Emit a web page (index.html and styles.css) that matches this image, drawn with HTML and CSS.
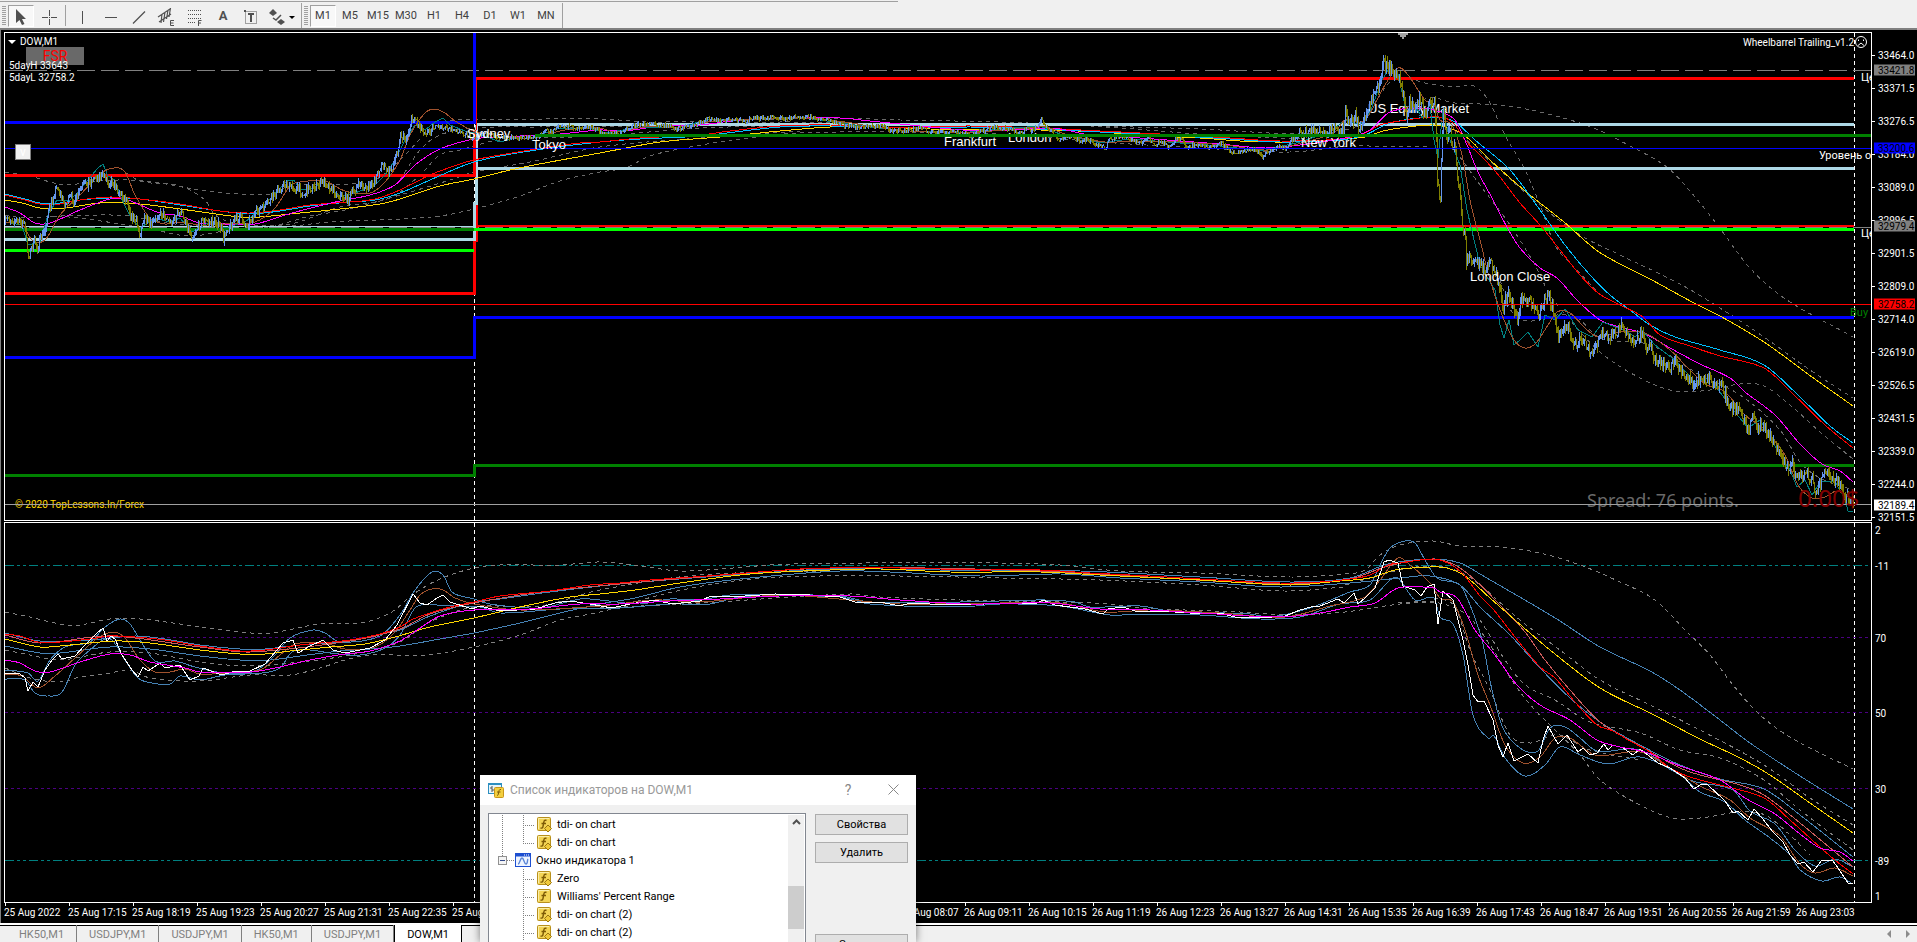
FILE: index.html
```html
<!DOCTYPE html>
<html lang="ru">
<head>
    <meta charset="UTF-8">
    <meta name="viewport" content="width=device-width, initial-scale=1.0">
    <title>DOW,M1</title>
    <link rel="stylesheet" href="styles.css">
</head>
<body>
    <svg width="0" height="0" class="defs">
        <symbol id="icon-func" viewBox="0 0 16 16">
            <rect x="1.5" y="1.5" width="13" height="13" rx="1" fill="#f3d455" stroke="#b8901c"/>
            <path d="M2.5 13V2.5H13" fill="none" stroke="#fbeea8"/>
            <path d="M10.5 4.5C8.5 3.5 8 5 7.8 6.5L7 10.5C6.7 12 6 12.5 4.5 11.8M5.5 7.5H10" fill="none" stroke="#7d5a06" stroke-width="1.4"/>
        </symbol>
        <symbol id="icon-func-custom" viewBox="0 0 16 16">
            <use href="#icon-func"/>
            <path d="M12 9L15.5 12.5L12 16L8.5 12.5Z" fill="#f0c93a" stroke="#9a7610"/>
        </symbol>
    </svg>

    <header class="toolbar">
        <div class="tool-group">
            <span class="grip"></span>
            <button class="tool active" aria-label="Cursor"><svg viewBox="0 0 24 22"><path d="M7 4V18L10.5 15L13 20L15.5 19L13 14H17Z" fill="#505050"/></svg></button>
            <button class="tool cross" aria-label="Crosshair"><svg viewBox="0 0 24 22"><path d="M11.500 5V11M11.500 14V20M4 12.500H10M13 12.500H19M11 12.500H12" stroke="#505050" fill="none"/></svg></button>
            <span class="divider"></span>
            <button class="tool" aria-label="Vertical line"><svg viewBox="0 0 24 22"><path d="M11.5 6V19" stroke="#505050"/></svg></button>
            <button class="tool" aria-label="Horizontal line"><svg viewBox="0 0 24 22"><path d="M6 12.5H18" stroke="#505050"/></svg></button>
            <button class="tool" aria-label="Trend line"><svg viewBox="0 0 24 22"><path d="M6 18.5L18 6.5" stroke="#505050" stroke-width="1.3"/></svg></button>
            <button class="tool" aria-label="Channel"><svg viewBox="0 0 24 22"><path d="M3 12L15 4M4 17L16 9M7 9L6 18M10 7L8.5 17M13 5L11.5 14M15.500 3L14 12" stroke="#505050" stroke-width="1.2" fill="none"/><path d="M19 15.5H15.500V20.5H19M15.5 18H18.5" stroke="#505050" fill="none"/></svg></button>
            <button class="tool" aria-label="Fibonacci"><svg viewBox="0 0 24 22"><path d="M5 5.5H18M5 9.5H18M5 13.5H18M5 17.5H13" stroke="#505050" stroke-dasharray="1 1"/><path d="M18.500 15.5H15.5V21M15.5 18H18" stroke="#505050" fill="none"/></svg></button>
            <button class="tool letter">A</button>
            <button class="tool" aria-label="Text label"><svg viewBox="0 0 24 22"><rect x="6.5" y="6.5" width="11" height="12" fill="none" stroke="#505050" stroke-dasharray="1 1"/><path d="M9 9H15M12 9V17" stroke="#505050" stroke-width="2"/><path d="M5 6H7" stroke="#505050" stroke-width="2"/></svg></button>
            <button class="tool arrows" aria-label="Arrows"><svg viewBox="0 0 34 22"><path d="M4 8L8 4L12 8L8 11Z" fill="#505050"/><path d="M8 13L11 15L16 10" stroke="#505050" stroke-width="1.5" fill="none"/><path d="M12 17L16 14L20 17L16 20Z" fill="#505050"/><path d="M24 11H30L27 14Z" fill="#000"/></svg></button>
        </div>
        <div class="tool-group">
            <span class="grip"></span>
            <button class="period active">M1</button>
            <button class="period">M5</button>
            <button class="period">M15</button>
            <button class="period">M30</button>
            <button class="period">H1</button>
            <button class="period">H4</button>
            <button class="period">D1</button>
            <button class="period">W1</button>
            <button class="period">MN</button>
        </div>
    </header>

    <main class="chart">
        <section class="pane">
            <div class="labels" id="backLabels"></div>
            <svg class="plot" id="pricePlot" viewBox="5 33 1866 487" preserveAspectRatio="none"></svg>
            <div class="labels" id="frontLabels"></div>
            <div class="symbol"><span class="caret"></span>DOW,M1</div>
            <button class="fsr">FSR</button>
            <div class="day-range">
                <p>5dayH 33643</p>
                <p>5dayL 32758.2</p>
            </div>
            <button class="toggle">v</button>
            <div class="expert">Wheelbarrel Trailing_v1.2<svg width="14" height="14" viewBox="0 0 14 14"><circle cx="7" cy="7" r="5.5" fill="none" stroke="#fff"/><path d="M4 10.5L7 8L10 10.5M4.5 4.500V6M9.5 4.5V6" fill="none" stroke="#fff"/></svg></div>
        </section>
        <div class="scale price-scale">
            <ol class="prices">
                <li>33464.0</li>
                <li>33371.5</li>
                <li>33276.5</li>
                <li>33184.0</li>
                <li>33089.0</li>
                <li>32996.5</li>
                <li>32901.5</li>
                <li>32809.0</li>
                <li>32714.0</li>
                <li>32619.0</li>
                <li>32526.5</li>
                <li>32431.5</li>
                <li>32339.0</li>
                <li>32244.0</li>
                <li>32151.5</li>
            </ol>
            <div id="priceMarks"></div>
        </div>

        <section class="pane">
            <svg class="plot" id="indicatorPlot" viewBox="5 523 1866 379" preserveAspectRatio="none"></svg>
        </section>
        <div class="scale" id="levelScale"></div>

        <ol class="times" id="times"></ol>
    </main>

    <footer class="tabs">
        <nav>
            <a href="#">HK50,M1</a>
            <a href="#">USDJPY,M1</a>
            <a href="#">USDJPY,M1</a>
            <a href="#">HK50,M1</a>
            <a href="#">USDJPY,M1</a>
            <a href="#" class="active">DOW,M1</a>
        </nav>
        <svg class="tab-arrows" width="24" height="8" viewBox="0 0 24 8"><path d="M4 0V8L0 4ZM19 0V8L23 4Z" fill="#8c8c8c"/></svg>
    </footer>

    <div class="dialog" role="dialog" aria-labelledby="dialogTitle">
        <div class="dialog-head">
            <svg width="16" height="16" viewBox="0 0 16 16"><rect x="0.5" y="1.5" width="13" height="10" fill="#e8f5fb" stroke="#2d8fc0"/><path d="M0 2H14" stroke="#2d8fc0" stroke-width="2"/><path d="M4 4V10M2 6H4M4 8H6" stroke="#555"/><rect x="6.5" y="5.5" width="9" height="10" rx="1" fill="#f3cf3f" stroke="#c8961a"/><path d="M13 7.5C11 7 11 9 10.5 11C10.3 13 10 13.5 9 13.3M9 10H12.5" fill="none" stroke="#7d5a06"/></svg>
            <h2 id="dialogTitle">Список индикаторов на DOW,M1</h2>
            <button aria-label="Help">?</button>
            <button aria-label="Close"><svg width="11" height="11" viewBox="0 0 11 11"><path d="M0.5 0.5L10.5 10.5M10.5 0.5L0.5 10.5" stroke="#888"/></svg></button>
        </div>
        <div class="dialog-body">
            <div class="tree">
                <ul>
                    <li class="leaf"><svg class="icon"><use href="#icon-func-custom"/></svg>tdi- on chart</li>
                    <li class="leaf last"><svg class="icon"><use href="#icon-func-custom"/></svg>tdi- on chart</li>
                    <li class="branch"><svg width="9" height="9" viewBox="0 0 9 9"><rect x="0.5" y="0.5" width="8" height="8" fill="#f4f4f4" stroke="#919191"/><path d="M2 4.5H7" stroke="#31488a"/></svg><span class="dots"></span><svg class="icon" viewBox="0 0 16 16"><rect x="0.5" y="1.5" width="15" height="13" fill="#eef4ff" stroke="#1d4fd0"/><path d="M0 3H16" stroke="#1d4fd0" stroke-width="3"/><path d="M9 3H10M11 3H12M13 3H14" stroke="#fff"/><path d="M3 12C5 12 5 6 7 6S9 12 11 12S12 8 13 7" fill="none" stroke="#5c86d6" stroke-width="1.4"/></svg>Окно индикатора 1</li>
                    <li class="leaf"><svg class="icon"><use href="#icon-func-custom"/></svg>Zero</li>
                    <li class="leaf"><svg class="icon"><use href="#icon-func"/></svg>Williams' Percent Range</li>
                    <li class="leaf"><svg class="icon"><use href="#icon-func-custom"/></svg>tdi- on chart (2)</li>
                    <li class="leaf"><svg class="icon"><use href="#icon-func-custom"/></svg>tdi- on chart (2)</li>
                </ul>
                <div class="scrollbar">
                    <svg width="9" height="6" viewBox="0 0 9 6"><path d="M1 5L4.5 1.5L8 5" fill="none" stroke="#505050" stroke-width="2"/></svg>
                    <span class="thumb"></span>
                </div>
            </div>
            <div class="actions">
                <button>Свойства</button>
                <button>Удалить</button>
                <button class="close">Закрыть</button>
            </div>
        </div>
    </div>

    <script src="chart.js"></script>
</body>
</html>
```
FILE: styles.css
```css
* {
    box-sizing: border-box;
}

body {
    margin: 0;
    height: 100vh;
    display: flex;
    flex-direction: column;
    overflow: hidden;
    position: relative;
    background-color: #f0f0f0;
    color: #000;
    font-family: Roboto, "Liberation Sans", sans-serif;
    font-size: 11px;
}

button {
    font-family: inherit;
    padding: 0;
    border: none;
    background: none;
}

ol,
ul {
    list-style: none;
    margin: 0;
    padding: 0;
}

p,
h2 {
    margin: 0;
}

.defs {
    position: absolute;
}

/* toolbar */

.toolbar {
    flex: none;
    height: 30px;
    display: flex;
    padding-top: 3px;
    border-bottom: 2px solid #808080;
    background: linear-gradient(#a0a0a0, #a0a0a0) 0 1px / 898px 1px no-repeat #f0f0f0;
}

.tool-group {
    display: flex;
    align-items: center;
    padding: 0 2px;
    border-right: 1px solid #a0a0a0;
}

.grip {
    width: 4px;
    height: 20px;
    margin-right: 2px;
    background: repeating-linear-gradient(#a0a0a0 0 1px, #f0f0f0 1px 2px);
}

.divider {
    width: 1px;
    height: 21px;
    margin-right: 3px;
    background-color: #a0a0a0;
}

.tool {
    width: 28px;
    height: 22px;
    display: flex;
    align-items: center;
    justify-content: center;
}

.tool svg {
    width: 24px;
    height: 22px;
}

.tool.active,
.period.active {
    width: 26px;
    border: 1px solid;
    border-color: #a0a0a0 #fff #fff #a0a0a0;
    background-color: #f8f8f8;
}

.tool.cross {
    width: 31px;
}

.tool.letter {
    font-size: 13px;
    font-weight: bold;
    color: #505050;
}

.tool.arrows,
.tool.arrows svg {
    width: 34px;
}

.period {
    width: 28px;
    height: 22px;
    font-size: 11px;
    color: #404040;
}

/* chart */

.chart {
    flex: 1;
    min-height: 0;
    display: grid;
    grid-template-columns: 1fr 45px;
    grid-template-rows: 489fr 1px 381fr 20px;
    padding: 2px 0 0 3px;
    border-left: 1px solid #808080;
    background-color: #000;
    color: #fff;
    font-size: 10px;
    line-height: 11px;
}

.chart > :nth-child(3),
.chart > :nth-child(4) {
    grid-row: 3;
}

.pane {
    position: relative;
    border: 1px solid #fff;
    overflow: hidden;
    min-height: 0;
}

.plot {
    position: absolute;
    inset: 0;
    width: 100%;
    height: 100%;
    fill: none;
    shape-rendering: crispEdges;
}

.plot path {
    vector-effect: non-scaling-stroke;
}

.labels span {
    position: absolute;
    white-space: nowrap;
    transform: translateY(-50%);
    font-size: 11px;
}

.labels .session {
    font-family: "Liberation Sans", Arial, sans-serif;
    font-size: 13px;
}

.labels .buy {
    color: #008000;
}

.labels .copyright {
    color: #ffd700;
    font-size: 10px;
}

.labels .spread {
    color: #696969;
    font-family: "Noto Sans", sans-serif;
    font-size: 18px;
}

.labels .profit {
    color: #800000;
    font-family: "Noto Sans", sans-serif;
    font-size: 24px;
}

.symbol {
    position: absolute;
    left: 3px;
    top: 3px;
    display: flex;
    align-items: center;
    gap: 4px;
}

.caret {
    border: 4px solid transparent;
    border-top-color: #fff;
    border-bottom: none;
}

.fsr {
    position: absolute;
    left: 21px;
    top: 14px;
    width: 58px;
    height: 18px;
    background-color: #696969;
    color: #f00;
    font-size: 14px;
    line-height: 18px;
}

.day-range {
    position: absolute;
    left: 4px;
    top: 27px;
}

.day-range p + p {
    margin-top: 1px;
}

.toggle {
    position: absolute;
    left: 10px;
    top: 111px;
    width: 16px;
    height: 16px;
    border: 1px solid #808080;
    background-color: #f0f0f0;
    color: #fff;
    font-size: 12px;
    line-height: 12px;
}

.expert {
    position: absolute;
    right: 3px;
    top: 2px;
    display: flex;
    align-items: center;
}

.scale {
    position: relative;
    min-height: 0;
}

.price-scale {
    grid-column: 2;
}

.prices {
    height: calc(100% + 2px);
    display: flex;
    flex-direction: column;
    justify-content: space-between;
    padding-top: 18px;
}

.prices li {
    position: relative;
    padding-left: 6px;
}

.prices li::before {
    content: "";
    position: absolute;
    left: 0;
    top: 5px;
    width: 3px;
    height: 1px;
    background-color: #fff;
}

.mark {
    position: absolute;
    left: 2px;
    right: 2px;
    padding-left: 4px;
    transform: translateY(-50%);
    color: #000;
}

.level {
    position: absolute;
    left: 3px;
    transform: translateY(-50%);
}

.times {
    grid-column: 1 / 3;
    grid-row: 4;
    display: flex;
    overflow: hidden;
}

.times li {
    flex: none;
    width: 64px;
    padding-top: 4px;
    white-space: nowrap;
    background: linear-gradient(#fff, #fff) 1px 0 / 1px 3px no-repeat;
}

/* chart tabs */

.tabs {
    flex: none;
    height: 19px;
    display: flex;
    justify-content: space-between;
    align-items: center;
    border-top: 2px solid #fff;
    box-shadow: inset 0 1px #000;
    padding-right: 6px;
    padding-left: 2px;
}

.tabs nav {
    display: flex;
    height: 17px;
}

.tabs a {
    padding: 0 12px;
    color: #808080;
    font-size: 11px;
    line-height: 19px;
    text-decoration: none;
    border-right: 1px solid #808080;
}

.tabs a:first-child {
    padding-left: 17px;
}

.tabs .active {
    color: #000;
    background-color: #fff;
    border: solid #000;
    border-width: 0 1px;
}

/* indicator list window */

.dialog {
    position: absolute;
    left: 480px;
    bottom: 0;
    width: 436px;
    height: 167px;
    overflow: hidden;
    background-color: #f0f0f0;
    box-shadow: 0 0 8px rgba(0, 0, 0, 0.5);
}

.dialog-head {
    height: 30px;
    display: flex;
    align-items: center;
    padding: 0 17px 0 8px;
    background-color: #fff;
    color: #999;
}

.dialog-head h2 {
    flex: 1;
    margin-left: 6px;
    font-size: 12px;
    font-weight: normal;
}

.dialog-head button {
    width: 12px;
    margin-left: 33px;
    font-size: 14px;
    color: #888;
}

.dialog-body {
    display: flex;
    gap: 9px;
    padding: 8px;
}

.tree {
    flex: 1;
    height: 160px;
    display: flex;
    padding: 1px;
    border: 1px solid #828790;
    background-color: #fff;
    font-size: 11px;
}

.tree ul {
    flex: 1;
    background: repeating-linear-gradient(#808080 0 1px, #fff 1px 2px) 12px 0 / 1px 44px no-repeat;
}

.tree li {
    height: 18px;
    display: flex;
    align-items: center;
    white-space: nowrap;
}

.icon {
    width: 16px;
    height: 16px;
    margin-right: 5px;
}

.leaf {
    padding-left: 46px;
    background:
        repeating-linear-gradient(#808080 0 1px, transparent 1px 2px) 33px 0 / 1px 18px no-repeat,
        repeating-linear-gradient(90deg, #808080 0 1px, transparent 1px 2px) 33px 10px / 12px 1px no-repeat;
}

.leaf.last {
    background-size: 1px 10px, 12px 1px;
}

.branch {
    padding-left: 8px;
}

.dots {
    width: 8px;
    height: 1px;
    background: repeating-linear-gradient(90deg, #808080 0 1px, transparent 1px 2px);
}

.scrollbar {
    width: 16px;
    background-color: #f0f0f0;
    text-align: center;
}

.thumb {
    display: block;
    height: 43px;
    margin-top: 58px;
    background-color: #cdcdcd;
}

.actions {
    width: 93px;
    padding-top: 1px;
}

.actions button {
    width: 93px;
    height: 21px;
    margin-bottom: 7px;
    border: 1px solid #adadad;
    background-color: #e1e1e1;
    font-size: 11px;
    display: block;
}

.actions .close {
    margin-top: 71px;
}
```
FILE: chart.js
```js
const NS = 'http://www.w3.org/2000/svg';
const pricePlot = document.getElementById('pricePlot');
const indicatorPlot = document.getElementById('indicatorPlot');

function parse(text) {
    return text.trim().split(/\s+/).map(p => p.split(',').map(Number));
}

function addPath(plot, d, color, width, dash) {
    const path = document.createElementNS(NS, 'path');
    path.setAttribute('d', d);
    path.setAttribute('stroke', color);
    path.setAttribute('stroke-width', width || 1);
    if (dash) path.setAttribute('stroke-dasharray', dash);
    plot.appendChild(path);
}

function polyline(plot, text, color, width, dash) {
    addPath(plot, 'M' + parse(text).join('L'), color, width, dash);
}

// Smooth line through all the points
function curve(plot, text, color, width, dash) {
    const p = parse(text);
    let d = 'M' + p[0];
    for (let i = 0; i < p.length - 1; i++) {
        const a = p[i - 1] || p[i], b = p[i], c = p[i + 1], e = p[i + 2] || c;
        const k = (c[0] - b[0]) / 3;
        const end = (c[1] - b[1]) / (c[0] - b[0]);
        const s1 = a === b ? end : (c[1] - a[1]) / (c[0] - a[0]);
        const s2 = e === c ? end : (e[1] - b[1]) / (e[0] - b[0]);
        d += `C${b[0] + k},${b[1] + s1 * k} ${c[0] - k},${c[1] - s2 * k} ${c[0]},${c[1]}`;
    }
    addPath(plot, d, color, width, dash);
}

// One bar per pixel, blue when it closes higher and olive when lower
function bars(text) {
    const p = parse(text);
    let up = '', down = '', seed = 7, prev = p[0][1];
    const rnd = () => (seed = (seed * 16807) % 2147483647) / 2147483647 - 0.5;
    for (let i = 0; i < p.length - 1; i++) {
        const [x1, y1] = p[i], [x2, y2] = p[i + 1];
        const range = x1 > 1340 ? 11 : x1 > 430 && x1 < 1290 ? 4 : 8;
        for (let x = x1; x < x2; x++) {
            const y = y1 + (y2 - y1) * (x - x1) / (x2 - x1) + rnd() * range;
            const top = Math.min(y, prev) - Math.abs(rnd()) * range;
            const low = Math.max(y, prev) + Math.abs(rnd()) * range;
            const seg = `M${x + 0.5},${top.toFixed(1)}V${low.toFixed(1)}`;
            if (y < prev) up += seg; else down += seg;
            prev = y;
        }
    }
    addPath(pricePlot, down, '#808000', 1);
    addPath(pricePlot, up, '#6495ed', 1);
}

// Day separator and last bar
for (const plot of [pricePlot, indicatorPlot]) {
    polyline(plot, '474.5,33 474.5,902', '#fff', 1, '4 3');
    polyline(plot, '1854.5,33 1854.5,902', '#fff', 1, '4 3');
}
addPath(pricePlot, 'M1398,34H1408M1400,36H1406M1402,38H1404', '#a0a0a0', 2);

// Price pane: channels
const gray = '#696969';
const dash = '4 4';
curve(pricePlot, '5,172 30,176 50,182 65,185 100,181 130,180 160,183 200,190 240,194 270,194 290,186 320,184 350,184 375,180 400,160 430,130 450,121 474,120 600,119 650,122 750,120 830,118 900,120 1000,122 1100,126 1200,129 1300,134 1345,130 1365,120 1380,95 1395,78 1413,80 1430,84 1455,87 1470,85 1480,90 1490,103 1505,135 1525,170 1540,205 1555,245 1575,268 1598,292', gray, 1, dash);
curve(pricePlot, '1400,110 1430,98 1455,103 1500,105 1540,112 1591,127 1630,146 1668,168 1695,197 1719,227 1749,267 1784,298 1853,337', gray, 1, dash);
curve(pricePlot, '1455,130 1500,170 1540,205 1580,235 1620,255 1680,284 1720,308 1764,337 1810,370 1853,398', gray, 1, dash);
curve(pricePlot, '1455,150 1480,185 1510,225 1535,265 1550,295 1570,320 1600,352 1640,378 1675,391 1710,390 1740,384 1764,386 1790,405 1820,432 1853,459', gray, 1, dash);
curve(pricePlot, '5,215 25,218 60,216 100,215 130,216 160,222 200,226 290,226 330,222 400,219 440,216 474,209 520,196 560,181 600,172 625,168 650,156 690,147 740,139 800,133 900,132 1000,134 1100,142 1200,148 1290,152 1350,146 1400,147 1430,146', gray, 1, dash);
curve(pricePlot, '120,168 140,181 180,186 205,200 215,215 240,224 290,224 340,207 390,198 420,175 440,155 460,150 500,140 600,136 700,128 800,126', gray, 1, dash);
curve(pricePlot, '50,216 80,218 150,229 190,236 230,230 270,227 310,216 345,210 400,195 450,180 474,172 530,162 600,147 700,138 800,131', gray, 1, dash);
curve(pricePlot, '400,180 420,150 440,135 474,128 540,127 600,127 700,125 780,122 900,124 1050,124 1120,128 1200,134 1300,139', gray, 1, dash);
curve(pricePlot, '1500,280 1512,312 1530,321 1550,316 1575,316 1600,338 1650,345 1700,375 1740,395 1780,430 1800,462 1820,478 1853,490', gray, 1, dash);

// Price pane: pivot levels
polyline(pricePlot, '5,70.5 1854,70.5', '#808080', 1, '18 6');
polyline(pricePlot, '1854,70.5 1871,70.5', '#808080', 1);
polyline(pricePlot, '5,226.5 474,226.5', '#add8e6', 1);
polyline(pricePlot, '477,226 1854,226', '#f00', 2);
polyline(pricePlot, '5,227.5 1871,227.5', '#808080', 1, '18 6');
polyline(pricePlot, '5,293.5 474.5,293.5 474.5,240 476,240 476,125', '#f00', 3);
polyline(pricePlot, '5,239.5 474.5,239.5 474.5,203 476,203 476,125', '#add8e6', 3);
polyline(pricePlot, '476,124.5 1854,124.5', '#add8e6', 3);
polyline(pricePlot, '476,168.5 1854,168.5', '#add8e6', 3);
polyline(pricePlot, '5,175.5 474.5,175.5 474.5,130', '#f00', 3);
polyline(pricePlot, '476.5,130 476.5,78', '#f00', 1);
polyline(pricePlot, '476,78.5 1854,78.5', '#f00', 3);
polyline(pricePlot, '5,122.5 474.5,122.5 474.5,33', '#00f', 3);
polyline(pricePlot, '5,357.5 474.5,357.5 474.5,317.5 1854,317.5', '#00f', 3);
polyline(pricePlot, '5,229.5 474,229.5', '#008000', 3);
polyline(pricePlot, '5,475.5 474.5,475.5 474.5,465.5 1854,465.5', '#008000', 3);
polyline(pricePlot, '5,250.5 474,250.5', '#0f0', 3);
polyline(pricePlot, '474,229.5 1854,229.5', '#0f0', 3);

// Price pane: averages
curve(pricePlot, '5,200 22,203 40,208 65,208 100,203 140,204 180,209 240,217 260,217 290,214 340,209 380,204 400,199 440,186 474,179 510,170 550,162 600,153 660,142 720,137 750,134 780,131 830,127 880,127 930,129 980,130 1040,130 1100,132 1150,136 1200,138 1240,141 1285,142 1330,140 1365,137 1383,131 1400,128 1434,125 1455,130 1470,140 1490,160 1510,178 1530,195 1564,222 1599,252 1650,279 1694,303 1720,316 1764,342 1812,377 1853,406', '#ffd700');
curve(pricePlot, '5,194 25,199 40,203 60,203 80,200 110,198 140,199 180,205 220,211 250,214 280,211 310,206 350,202 375,200 400,193 430,180 460,167 474,162 500,156 550,148 600,142 640,139 700,136 780,127 830,126 930,128 970,127 1040,129 1100,132 1160,135 1230,139 1280,142 1340,140 1365,135 1390,123 1435,117 1455,122 1475,140 1510,170 1540,210 1565,245 1590,275 1610,295 1630,310 1650,325 1675,337 1720,350 1764,365 1800,397 1830,426 1853,443', '#00bfff');
curve(pricePlot, '5,195 25,200 40,204 60,204 80,200 110,197 140,199 180,204 220,211 250,213 280,210 310,205 350,202 375,199 400,190 430,175 460,164 474,160 500,155 550,147 580,143 600,142 640,138 700,135 730,131 780,126 830,125 880,127 930,127 970,126 1040,128 1100,131 1160,134 1230,138 1280,141 1340,139 1365,133 1380,125 1400,121 1430,117 1445,118 1455,125 1465,140 1485,160 1500,177 1520,203 1540,225 1560,250 1580,275 1598,293 1620,305 1643,317 1660,335 1690,346 1720,356 1764,368 1790,391 1825,425 1853,448', '#f00');
curve(pricePlot, '5,207 20,213 35,223 50,223 80,210 110,199 125,199 140,205 160,213 180,216 200,223 225,224 255,224 285,215 315,207 340,201 370,195 395,185 415,165 440,149 474,139 500,137 560,134 600,130 625,131 660,126 700,125 740,120 790,118 840,118 870,121 920,126 980,131 1030,129 1060,129 1090,135 1140,138 1180,141 1220,144 1265,148 1300,145 1350,137 1370,130 1390,112 1420,108 1434,110 1455,120 1467,145 1477,170 1492,198 1508,229 1520,248 1540,268 1557,278 1577,300 1600,320 1620,327 1645,334 1670,348 1700,364 1730,378 1745,392 1775,415 1800,444 1822,464 1840,471 1853,482', '#f0f');
polyline(pricePlot, '5,222 22,225 28,245 40,242 48,215 57,200 70,200 80,190 92,175 98,168 103,164 108,176 115,180 122,200 131,218 140,228 155,218 170,222 180,218 192,232 210,222 225,228 245,222 262,208 278,190 288,180 294,180 300,190 312,188 323,182 340,196 355,193 375,185 385,175 395,160 405,140 415,125 425,130 435,122 443,118 450,125 465,131 480,134 490,138 500,142 515,138 530,138 560,128 590,128 606,133 640,127 680,127 711,119 755,119 800,117 840,123 870,127 910,131 960,133 1000,129 1040,126 1060,134 1100,143 1130,139 1180,143 1220,146 1262,151 1300,142 1330,132 1345,120 1360,125 1370,112 1382,80 1388,70 1398,74 1406,110 1415,105 1422,118 1430,105 1434,140 1438,158 1443,110 1450,140 1460,165 1467,210 1480,265 1495,290 1500,325 1504,338 1509,320 1514,345 1520,340 1528,332 1538,347 1545,315 1555,320 1565,309 1578,330 1592,337 1603,322 1610,325 1625,330 1635,337 1642,330 1655,345 1675,360 1695,382 1710,378 1730,406 1748,428 1760,420 1780,455 1790,470 1797,487 1805,480 1812,495 1820,482 1835,481 1845,500 1848,511 1853,511', '#008080');
curve(pricePlot, '5,222 22,224 32,240 45,240 60,215 80,195 100,174 114,168 125,172 135,195 150,218 165,224 180,222 200,225 225,224 255,222 275,208 290,186 300,182 325,181 345,191 370,193 385,182 400,160 410,135 425,113 435,109 445,113 455,121 474,131 500,136 530,138 565,130 600,128 615,132 645,127 680,127 715,121 760,119 805,118 845,122 875,127 910,131 960,133 1005,130 1045,127 1065,134 1105,142 1135,141 1180,142 1225,145 1267,150 1305,142 1335,132 1345,120 1365,120 1385,85 1398,68 1408,75 1425,100 1434,105 1440,120 1452,125 1462,155 1470,200 1480,240 1490,280 1502,315 1514,340 1525,348 1536,343 1548,325 1557,312 1570,313 1585,328 1598,337 1620,332 1645,333 1670,350 1690,370 1705,384 1725,392 1745,415 1765,430 1785,455 1798,485 1812,498 1825,497 1837,491 1850,498', '#a0522d');

bars('5,223 8,218 14,221 20,222 24,224 26,240 28,257 31,248 34,242 37,248 40,238 44,232 48,212 51,203 54,192 57,186 60,195 65,205 70,197 75,202 80,188 85,185 92,180 96,175 100,177 105,176 108,184 112,180 117,190 122,197 127,200 131,218 136,222 139,235 142,222 145,218 149,226 155,220 158,213 164,215 170,222 176,217 180,212 185,220 188,228 191,236 197,228 203,220 209,222 215,222 221,228 223,240 226,230 232,222 237,218 241,219 246,225 253,216 258,210 265,207 272,198 278,190 284,183 288,186 294,187 299,190 303,196 308,188 315,187 323,181 330,188 336,194 342,196 348,199 354,190 360,183 366,189 371,187 376,175 382,163 388,174 393,165 397,150 400,134 405,140 409,128 413,116 418,124 423,130 427,133 432,127 440,127 450,129 458,132 466,135 474,138 480,135 490,134 500,138 515,137 528,138 538,136 545,130 552,132 558,124 565,126 575,128 585,126 595,129 606,134 615,134 624,130 635,125 645,124 652,123 662,125 668,126 675,129 685,127 695,125 702,122 706,119 711,117 718,121 730,120 745,121 755,118 765,118 775,117 785,119 796,116 808,117 820,119 832,121 840,124 850,127 858,128 870,126 882,126 890,130 900,131 908,131 918,128 924,128 928,133 935,132 945,133 955,131 962,134 972,135 978,132 988,129 996,127 1005,129 1012,130 1018,133 1026,130 1033,131 1041,119 1046,128 1052,131 1057,140 1065,138 1072,136 1080,142 1088,140 1095,144 1103,145 1105,150 1108,140 1115,138 1123,135 1130,140 1140,143 1148,138 1156,146 1160,140 1168,147 1175,140 1181,139 1186,148 1195,144 1205,147 1212,148 1219,141 1226,148 1231,153 1240,152 1248,151 1255,149 1262,157 1270,150 1278,147 1285,149 1290,143 1300,134 1310,131 1316,130 1325,134 1331,128 1338,132 1343,129 1345,110 1349,125 1355,115 1359,130 1363,125 1368,109 1373,98 1378,88 1383,62 1388,68 1394,74 1399,78 1401,90 1403,95 1406,118 1409,102 1413,108 1416,105 1420,98 1423,112 1426,115 1430,102 1434,98 1436,140 1437,180 1439,195 1440,200 1441,160 1443,110 1446,140 1449,128 1452,145 1455,150 1457,180 1460,195 1462,225 1465,240 1466,262 1469,250 1472,268 1475,262 1480,260 1484,270 1488,262 1493,265 1496,275 1499,288 1503,305 1508,296 1512,304 1516,320 1521,300 1527,302 1533,304 1538,315 1543,300 1548,296 1553,312 1558,335 1563,330 1568,325 1572,345 1578,342 1583,340 1588,350 1593,352 1598,340 1603,335 1608,342 1613,332 1621,328 1627,336 1634,345 1641,332 1646,345 1651,348 1656,366 1662,362 1668,370 1675,362 1680,370 1688,378 1693,388 1698,380 1704,380 1709,378 1714,386 1720,384 1726,398 1730,406 1735,412 1738,406 1743,422 1748,430 1754,412 1757,430 1761,424 1766,430 1772,440 1778,450 1783,460 1788,470 1792,458 1794,478 1800,478 1806,472 1812,478 1815,492 1820,482 1826,472 1832,478 1838,484 1844,494 1850,502 1854,506');

polyline(pricePlot, '535,135.5 1871,135.5', '#008000', 3);
polyline(pricePlot, '5,148.5 1871,148.5', '#00f', 1);
polyline(pricePlot, '5,304.5 1871,304.5', '#f00', 1);
polyline(pricePlot, '5,504.5 1871,504.5', '#a0a0a0', 1);

// Indicator pane: levels
polyline(indicatorPlot, '5,565.5 1871,565.5', '#008080', 1, '9 3 3 3 3 3');
polyline(indicatorPlot, '5,860.5 1871,860.5', '#008080', 1, '9 3 3 3 3 3');
polyline(indicatorPlot, '5,637.5 1871,637.5', '#4b0082', 1, '3 3');
polyline(indicatorPlot, '5,712.5 1871,712.5', '#4b0082', 1, '3 3');
polyline(indicatorPlot, '5,788.5 1871,788.5', '#4b0082', 1, '3 3');

// Indicator pane: channels
curve(indicatorPlot, '5,612 30,617 60,624 80,625 110,619 140,619 180,624 240,632 270,633 320,624 360,623 390,613 415,593 440,579 474,568 500,565 560,565 600,562 640,566 680,571 720,569 790,564 1000,563 1060,565 1120,571 1200,573 1290,577 1345,574 1365,570 1380,555 1400,545 1433,541 1460,546 1500,547 1540,553 1580,565 1620,582 1655,600 1685,630 1710,655 1733,685 1760,715 1795,740 1853,769', '#808080', 1, dash);
curve(indicatorPlot, '1345,585 1400,570 1433,566 1460,572 1480,585 1520,620 1560,650 1600,680 1650,705 1700,730 1764,765 1810,798 1853,825', '#808080', 1, dash);
curve(indicatorPlot, '1398,603 1434,602 1467,615 1490,645 1515,685 1535,710 1550,725 1580,755 1600,780 1640,805 1672,818 1700,818 1740,812 1765,815 1790,835 1810,855', '#808080', 1, dash);
curve(indicatorPlot, '5,650 30,655 60,660 110,652 150,653 200,662 250,666 300,662 350,655 400,642 430,622 474,607 540,606 600,590 700,575 840,571', '#808080', 1, dash);
curve(indicatorPlot, '5,668 30,678 60,682 80,677 110,673 130,670 150,678 200,681 250,675 290,675 320,668 345,660 370,655 425,655 474,647 520,635 560,620 600,612 660,595 720,583 780,577 900,576 1000,578 1100,580 1200,585 1284,591 1345,587', '#808080', 1, dash);
curve(indicatorPlot, '1434,598 1455,607 1470,650 1490,690 1510,735 1530,743 1545,738 1560,735 1590,750 1640,760', '#808080', 1, dash);
curve(indicatorPlot, '1480,620 1520,680 1555,700 1590,722 1640,733 1680,750 1720,758 1764,780 1800,810 1853,850', '#808080', 1, dash);
curve(indicatorPlot, '600,608 700,603 850,594 880,597 960,600 1060,602 1110,604 1140,608 1240,612 1290,615 1345,612 1400,604 1434,602', '#808080', 1, dash);

// Indicator pane: averages
const steel = '#4682b4';
curve(indicatorPlot, '5,633 40,641 90,640 135,636 165,639 200,645 240,649 265,649 300,645 350,641 380,634 400,630 430,616 474,602 500,599 550,592 620,584 720,576 830,569 940,570 1080,571 1200,577 1290,582 1350,578 1388,564 1433,559 1460,563 1480,574 1530,603 1560,621 1600,647 1650,671 1680,690 1720,720 1750,743 1800,776 1853,809', steel);
curve(indicatorPlot, '5,646 40,653 60,653 110,647 150,649 200,656 240,660 270,660 300,656 340,651 370,649 400,646 440,639 474,633 520,623 560,613 600,604 635,598 680,587 750,578 840,571 890,572 980,576 1060,574 1120,578 1200,582 1280,587 1350,583 1400,578 1430,576 1460,585 1480,607 1510,635 1540,668 1570,698 1600,722 1640,745 1680,765 1720,779 1764,789 1800,815 1853,857', steel);
curve(indicatorPlot, '5,670 28,673 38,681 50,660 65,647 90,642 105,627 120,619 130,624 140,640 155,661 175,661 195,667 225,673 255,671 275,655 290,638 313,630 325,633 340,642 380,636 400,615 415,590 432,572 443,575 452,592 474,599 490,604 540,608 580,599 600,600 640,604 670,599 700,600 730,595 840,596 870,602 960,602 1000,601 1045,600 1075,602 1090,607 1140,606 1170,611 1250,614 1270,617 1310,608 1350,592 1370,585 1380,565 1390,548 1405,541 1415,543 1425,560 1437,578 1460,585 1470,605 1482,640 1492,690 1503,728 1520,748 1538,751 1550,728 1565,727 1580,738 1597,751 1640,750 1690,780 1733,790 1750,811 1775,824 1795,850 1815,866 1835,859 1853,867', steel);
curve(indicatorPlot, '5,679 25,680 35,693 48,696 62,692 75,665 90,650 103,640 112,640 125,660 138,678 152,683 170,684 180,676 200,680 225,675 262,673 280,668 292,652 310,650 330,653 360,655 385,648 400,635 415,608 430,605 455,606 480,607 500,613 560,609 620,608 670,604 710,604 740,597 840,597 870,604 960,607 1000,604 1060,606 1110,615 1140,614 1200,615 1260,619 1300,617 1340,604 1370,600 1390,580 1398,578 1415,600 1434,598 1440,617 1453,624 1463,655 1473,715 1488,738 1494,736 1505,758 1525,776 1545,765 1560,747 1580,755 1608,764 1640,757 1680,775 1700,792 1725,802 1745,820 1770,838 1790,855 1800,870 1822,881 1840,877 1853,884', steel);
curve(indicatorPlot, '5,674 22,676 38,688 55,676 75,658 98,638 113,632 125,638 140,660 155,672 170,672 185,669 200,674 240,672 262,669 280,655 295,644 325,643 345,649 375,647 395,632 410,610 420,595 432,589 443,590 455,598 474,604 520,610 600,606 655,600 700,602 780,595 850,600 900,604 1000,603 1060,603 1105,612 1150,610 1220,613 1285,617 1330,606 1365,597 1380,580 1398,558 1410,565 1430,583 1440,598 1453,602 1465,630 1478,675 1490,705 1505,745 1523,763 1540,757 1555,738 1570,738 1595,755 1640,752 1670,768 1700,786 1730,800 1750,818 1780,836 1800,864 1815,873 1835,868 1853,876', '#a0522d');
curve(indicatorPlot, '5,635 40,643 110,636 200,647 250,652 350,641 400,629 430,614 474,603 550,591 700,577 830,568 1040,571 1280,584 1350,579 1388,566 1433,559 1455,565 1475,580 1500,605 1525,632 1545,660 1570,690 1600,722 1640,746 1680,768 1700,775 1740,785 1764,795 1800,823 1853,867', '#cd5c5c');
curve(indicatorPlot, '5,639 40,647 60,646 115,641 150,643 200,650 240,654 265,654 290,651 330,647 365,644 395,637 430,627 474,618 520,607 570,597 600,594 635,590 680,583 750,574 830,570 880,569 950,572 1040,572 1100,575 1200,580 1290,585 1340,581 1370,578 1395,570 1430,567 1447,568 1465,576 1490,598 1515,620 1550,650 1600,688 1650,713 1700,739 1740,758 1770,775 1810,803 1853,833', '#ffd700');
curve(indicatorPlot, '5,634 20,636 38,642 60,642 90,639 110,636 135,637 165,640 200,646 240,651 265,650 300,645 350,640 380,634 400,627 413,619 450,607 474,602 500,596 550,591 590,585 620,583 650,580 680,578 720,575 800,569 830,568 900,568 940,569 980,570 1040,570 1090,573 1150,576 1200,579 1280,583 1320,582 1350,579 1370,575 1388,565 1400,563 1433,559 1450,564 1463,574 1480,596 1493,609 1515,637 1540,667 1555,678 1575,702 1597,725 1613,731 1630,741 1650,752 1670,768 1690,777 1720,785 1764,798 1790,820 1830,856 1853,874', '#f00', 1);
polyline(indicatorPlot, '5,673 20,674 25,678 28,691 33,682 38,687 45,670 52,660 58,654 62,659 75,656 85,645 97,633 103,628 107,641 111,636 115,639 122,655 132,670 138,677 143,667 148,671 160,663 165,668 180,665 190,680 199,676 203,668 222,675 235,671 250,671 265,664 283,643 293,640 298,653 310,646 323,640 333,650 345,653 370,648 385,640 397,625 413,594 420,603 427,605 437,598 443,595 450,602 472,609 480,606 500,611 535,609 555,603 570,601 590,604 612,608 630,604 655,600 672,604 700,601 711,596 730,597 775,594 810,595 840,597 855,602 880,602 900,606 910,603 950,605 985,604 1010,603 1035,604 1043,600 1055,605 1085,609 1103,614 1108,609 1123,607 1135,611 1160,611 1190,613 1220,613 1235,617 1260,618 1285,616 1300,610 1311,607 1320,606 1338,599 1344,603 1354,593 1358,604 1365,598 1375,588 1384,562 1389,560 1398,563 1403,586 1415,590 1421,596 1427,587 1434,584 1438,624 1443,591 1453,600 1463,640 1468,665 1473,695 1478,702 1484,701 1493,720 1498,745 1503,757 1508,743 1514,761 1528,754 1538,763 1543,740 1548,726 1558,744 1567,735 1578,752 1583,748 1590,755 1597,753 1604,744 1608,750 1613,745 1623,748 1633,755 1640,749 1658,763 1670,768 1685,778 1694,789 1700,785 1707,784 1725,801 1733,813 1738,811 1748,820 1754,809 1762,818 1773,832 1783,842 1790,855 1798,864 1804,862 1813,872 1822,860 1833,861 1838,868 1848,883 1853,884', '#fff');
curve(indicatorPlot, '5,660 20,663 35,671 50,672 80,662 110,654 130,655 150,662 185,668 200,672 250,672 275,668 310,660 345,654 370,651 400,641 420,628 440,616 474,610 530,609 580,604 620,604 670,601 720,599 780,596 850,596 900,600 970,604 1050,603 1100,609 1150,610 1200,613 1280,617 1320,613 1350,607 1375,603 1398,588 1434,588 1440,592 1457,598 1475,630 1495,655 1517,685 1540,705 1570,720 1597,740 1620,747 1645,752 1680,766 1720,780 1745,798 1775,814 1800,834 1820,848 1840,852 1853,861', '#f0f');

// Text objects on the price pane
function addLabel(layer, text, x, y, cls) {
    const span = document.createElement('span');
    span.textContent = text;
    span.className = cls || '';
    span.style.left = (x - 5) / 1866 * 100 + '%';
    span.style.top = (y - 33) / 487 * 100 + '%';
    document.getElementById(layer).appendChild(span);
}

addLabel('frontLabels', 'Sydney', 467, 133, 'session');
addLabel('frontLabels', 'Tokyo', 532, 144, 'session');
addLabel('backLabels', 'Frankfurt', 944, 141, 'session');
addLabel('backLabels', 'London', 1008, 137, 'session');
addLabel('frontLabels', 'New York', 1301, 142, 'session');
addLabel('backLabels', 'US Equity Market', 1368, 108, 'session');
addLabel('frontLabels', 'London Close', 1470, 276, 'session');
addLabel('backLabels', 'Spread: 76 points.', 1587, 500, 'spread');
addLabel('frontLabels', '0.00$', 1798, 497, 'profit');
addLabel('backLabels', '© 2020 TopLessons.In/Forex', 15, 504, 'copyright');
addLabel('frontLabels', 'Це', 1861, 77);
addLabel('frontLabels', 'Уровень о', 1819, 155);
addLabel('frontLabels', 'Це', 1861, 233);
addLabel('frontLabels', 'Buy', 1850, 312, 'buy');

const marks = [
    ['33421.8', 70, '#808080'],
    ['33200.6', 148, '#00f'],
    ['32979.4', 226, '#808080'],
    ['32758.2', 304, '#f00'],
    ['32189.4', 505, '#fff']
];
for (const [text, y, color] of marks) {
    const div = document.createElement('div');
    div.className = 'mark';
    div.textContent = text;
    div.style.top = (y - 32) / 489 * 100 + '%';
    div.style.backgroundColor = color;
    document.getElementById('priceMarks').appendChild(div);
}

const levels = [['2', 530], ['-11', 566], ['70', 638], ['50', 713], ['30', 789], ['-89', 861], ['1', 896]];
for (const [text, y] of levels) {
    const div = document.createElement('div');
    div.className = 'level';
    div.textContent = text;
    div.style.top = (y - 522) / 381 * 100 + '%';
    document.getElementById('levelScale').appendChild(div);
}

const times = ['25 Aug 2022', '25 Aug 17:15', '25 Aug 18:19', '25 Aug 19:23', '25 Aug 20:27', '25 Aug 21:31', '25 Aug 22:35', '25 Aug 23:39',
    '26 Aug 01:43', '26 Aug 02:47', '26 Aug 03:51', '26 Aug 04:55', '26 Aug 05:59', '26 Aug 07:03', '26 Aug 08:07', '26 Aug 09:11',
    '26 Aug 10:15', '26 Aug 11:19', '26 Aug 12:23', '26 Aug 13:27', '26 Aug 14:31', '26 Aug 15:35', '26 Aug 16:39', '26 Aug 17:43',
    '26 Aug 18:47', '26 Aug 19:51', '26 Aug 20:55', '26 Aug 21:59', '26 Aug 23:03'];
for (const time of times) {
    const li = document.createElement('li');
    li.textContent = time;
    document.getElementById('times').appendChild(li);
}
```
